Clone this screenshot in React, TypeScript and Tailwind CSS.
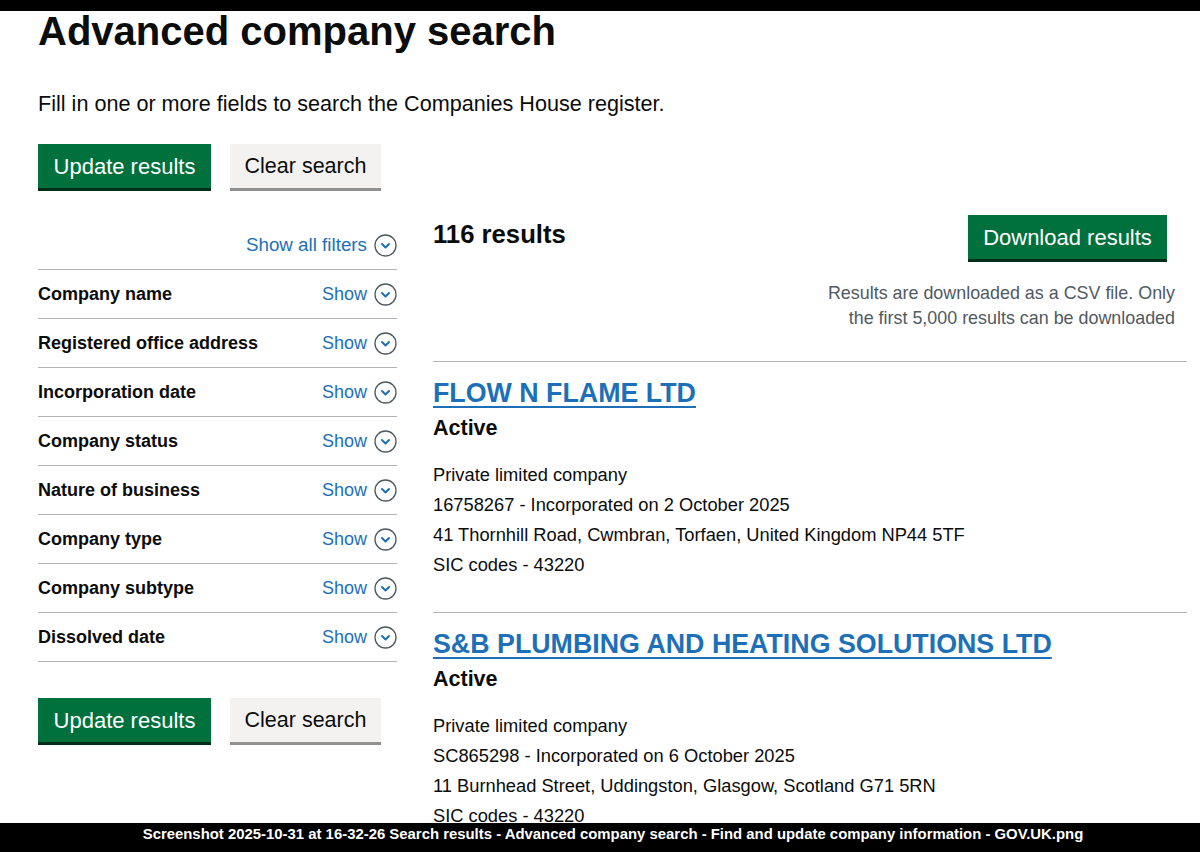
import React from 'react'

const font = { fontFamily: '"Liberation Sans", Arial, sans-serif' }

const filters = [
  'Company name',
  'Registered office address',
  'Incorporation date',
  'Company status',
  'Nature of business',
  'Company type',
  'Company subtype',
  'Dissolved date',
]

const results = [
  {
    name: 'FLOW N FLAME LTD',
    status: 'Active',
    lines: [
      'Private limited company',
      '16758267 - Incorporated on 2 October 2025',
      '41 Thornhill Road, Cwmbran, Torfaen, United Kingdom NP44 5TF',
      'SIC codes - 43220',
    ],
  },
  {
    name: 'S&B PLUMBING AND HEATING SOLUTIONS LTD',
    status: 'Active',
    lines: [
      'Private limited company',
      'SC865298 - Incorporated on 6 October 2025',
      '11 Burnhead Street, Uddingston, Glasgow, Scotland G71 5RN',
      'SIC codes - 43220',
    ],
  },
]

function Chevron() {
  return (
    <svg width="23" height="23" viewBox="0 0 23 23" className="shrink-0">
      <circle cx="11.5" cy="11.5" r="10.5" fill="none" stroke="#505a5f" strokeWidth="1.3" />
      <path d="M8 10l3.5 3.5L15 10" fill="none" stroke="#1d70b8" strokeWidth="2" strokeLinecap="round" strokeLinejoin="round" />
    </svg>
  )
}

function Buttons() {
  return (
    <div className="flex items-start gap-[19px]">
      <button className="h-[44px] w-[173px] bg-[#00703c] text-white text-[22px] shadow-[0_3px_0_#002d18]">
        Update results
      </button>
      <button className="h-[44px] w-[151px] bg-[#f3f2f1] text-[#0b0c0c] text-[21.5px] shadow-[0_3px_0_#929191]">
        Clear search
      </button>
    </div>
  )
}

export default function App() {
  return (
    <main className="relative h-[852px] w-[1200px] overflow-hidden bg-white text-[#0b0c0c]" style={font}>
      <div className="h-[11px] bg-black" />

      <div className="pl-[38px] pr-[13px]">
        <h1 className="text-[40px] leading-[40px] font-bold">Advanced company search</h1>
        <p className="mt-[40px] text-[21.6px] leading-[25px]">
          Fill in one or more fields to search the Companies House register.
        </p>

        <div className="mt-[28px]">
          <Buttons />
        </div>

        <div className="mt-[27px] flex gap-[36px]">
          {/* Filters */}
          <aside className="w-[359px] shrink-0">
            <div className="flex h-[55px] items-center justify-end gap-[7px] border-b border-[#b1b4b6] pt-[6px]">
              <span className="text-[18.8px] text-[#1d70b8]">Show all filters</span>
              <Chevron />
            </div>
            {filters.map((f) => (
              <div key={f} className="flex h-[49px] items-center justify-between border-b border-[#b1b4b6]">
                <span className="text-[18px] font-bold">{f}</span>
                <span className="flex items-center gap-[7px]">
                  <span className="text-[18px] text-[#1d70b8]">Show</span>
                  <Chevron />
                </span>
              </div>
            ))}
            <div className="mt-[36px]">
              <Buttons />
            </div>
          </aside>

          {/* Results */}
          <section className="flex-1">
            <div className="flex items-start justify-between">
              <h2 className="text-[25.7px] leading-[38px] font-bold">116 results</h2>
              <div className="flex flex-col items-end">
                <button className="mr-[20px] h-[44px] w-[199px] bg-[#00703c] text-white text-[22px] shadow-[0_3px_0_#002d18]">
                  Download results
                </button>
                <p className="mt-[22px] mr-[12px] text-right text-[17.9px] leading-[25px] text-[#505a5f]">
                  Results are downloaded as a CSV file. Only
                  <br />
                  the first 5,000 results can be downloaded
                </p>
              </div>
            </div>

            <div className="mt-[30px]">
              {results.map((r) => (
                <div key={r.name} className="border-t border-[#b1b4b6] pt-[15px] pb-[32px]">
                  <a href="#" className="text-[26.8px] leading-[32px] font-bold text-[#1d70b8] underline decoration-[2px] underline-offset-[4px]">
                    {r.name}
                  </a>
                  <div className="mt-[4px] text-[21.5px] leading-[30px] font-bold">{r.status}</div>
                  <ul className="mt-[17px] text-[18.3px] leading-[30px]">
                    {r.lines.map((l) => (
                      <li key={l}>{l}</li>
                    ))}
                  </ul>
                </div>
              ))}
            </div>
          </section>
        </div>
      </div>

      <div className="absolute bottom-0 left-0 right-0 flex h-[29px] items-start justify-center bg-black pt-[1px] pl-[26px] text-[14.9px] leading-[20px] font-bold text-white">
        Screenshot 2025-10-31 at 16-32-26 Search results - Advanced company search - Find and update company information - GOV.UK.png
      </div>
    </main>
  )
}
